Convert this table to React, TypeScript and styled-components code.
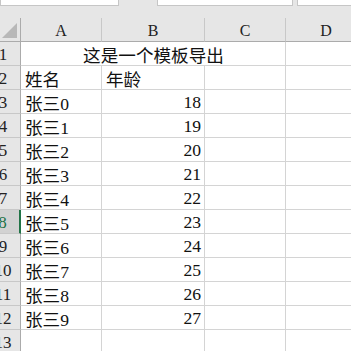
import React from "react"
import styled, { createGlobalStyle } from "styled-components"

const GlobalStyle = createGlobalStyle`
  html, body {
    margin: 0;
    padding: 0;
    background: #ffffff;
    overflow: hidden;
  }
  body {
    font-family: "Liberation Serif", "Noto Sans CJK SC", serif;
  }
`

const StyledWrapper = styled.main`
  background-color: #e6e6e6;
  height: 351px;
  overflow: hidden;
  width: 351px;
`
const StyledTopStrip = styled.div`
  display: flex;
  height: 18px;
`
const StyledInputBox = styled.div<{ $left: number; $width: number }>`
  background-color: #ffffff;
  border: 1px solid #c6c6c6;
  border-top: none;
  box-sizing: border-box;
  flex-shrink: 0;
  height: 6px;
  margin-left: ${({ $left }) => $left}px;
  width: ${({ $width }) => $width}px;
`
const StyledGrid = styled.div`
  display: grid;
  grid-auto-rows: 24px;
  grid-template-columns: 35px 81px 103px 81px 81px;
  margin-left: -14px;
  width: 381px;
`
const StyledCorner = styled.div`
  align-items: flex-end;
  border-bottom: 1px solid #ababab;
  border-right: 1px solid #ababab;
  box-sizing: border-box;
  display: flex;
  justify-content: flex-end;
  padding: 0 3px 3px 0;
`
const StyledColHead = styled.div`
  align-items: center;
  border-bottom: 1px solid #ababab;
  border-right: 1px solid #c8c8c8;
  box-sizing: border-box;
  color: #222;
  display: flex;
  font-size: 16px;
  justify-content: center;
  padding-top: 2px;
`
const StyledRowHead = styled.div<{ $active?: boolean }>`
  align-items: center;
  background-color: ${({ $active }) => ($active ? "#d2d2d2" : "#e6e6e6")};
  border-bottom: 1px solid #c8c8c8;
  border-right: ${({ $active }) => ($active ? "2px solid #217346" : "1px solid #ababab")};
  box-sizing: border-box;
  color: ${({ $active }) => ($active ? "#217346" : "#222")};
  display: flex;
  font-size: 17px;
  justify-content: center;
  padding: 2px 0 0 0;
`
const StyledCell = styled.div<{ $align?: string; $span?: number }>`
  align-items: center;
  background-color: #ffffff;
  border-bottom: 1px solid #d4d4d4;
  border-right: 1px solid #d4d4d4;
  box-sizing: border-box;
  color: #111;
  display: flex;
  font-size: 17.6px;
  grid-column: span ${({ $span }) => $span || 1};
  justify-content: ${({ $align }) => $align || "flex-start"};
  padding: 2px 3px 0 4px;
  white-space: nowrap;
`

const Triangle = () => (
  <svg width="15" height="15" viewBox="0 0 15 15">
    <polygon points="15,0 15,15 0,15" fill="#b8b8b8" />
  </svg>
)

const people = Array.from({ length: 10 }, (_, i) => ({ name: `张三${i}`, age: 18 + i }))

const App = () => {
  return (
    <StyledWrapper>
      <GlobalStyle />
      <StyledTopStrip>
        <StyledInputBox $left={0} $width={119} />
        <StyledInputBox $left={38} $width={136} />
        <StyledInputBox $left={4} $width={60} />
      </StyledTopStrip>
      <StyledGrid>
        <StyledCorner>
          <Triangle />
        </StyledCorner>
        {["A", "B", "C", "D"].map(letter => (
          <StyledColHead key={letter}>{letter}</StyledColHead>
        ))}

        <StyledRowHead>1</StyledRowHead>
        <StyledCell $span={3} $align="center">这是一个模板导出</StyledCell>
        <StyledCell />

        <StyledRowHead>2</StyledRowHead>
        <StyledCell>姓名</StyledCell>
        <StyledCell>年龄</StyledCell>
        <StyledCell />
        <StyledCell />

        {people.map(({ name, age }, i) => (
          <React.Fragment key={name}>
            <StyledRowHead $active={i + 3 === 8}>{i + 3}</StyledRowHead>
            <StyledCell>{name}</StyledCell>
            <StyledCell $align="flex-end">{age}</StyledCell>
            <StyledCell />
            <StyledCell />
          </React.Fragment>
        ))}

        <StyledRowHead>13</StyledRowHead>
        <StyledCell />
        <StyledCell />
        <StyledCell />
        <StyledCell />
      </StyledGrid>
    </StyledWrapper>
  )
}

export default App
